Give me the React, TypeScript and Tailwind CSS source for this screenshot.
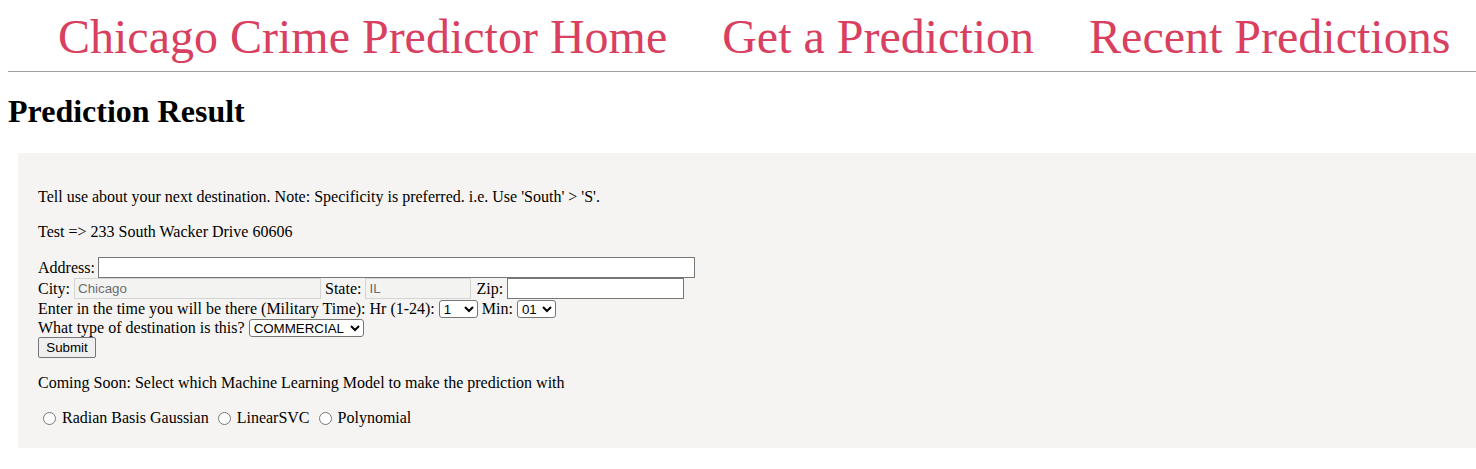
import React from 'react';

const navLinks = ['Chicago Crime Predictor Home', 'Get a Prediction', 'Recent Predictions'];

const models = ['Radian Basis Gaussian', 'LinearSVC', 'Polynomial'];

const App = () => {
  return (
    <div className="min-h-[469px] bg-white pl-2 font-['Liberation_Serif',serif] text-black">
      {/* Top navigation */}
      <nav className="flex h-[71px] gap-[55px] pl-[50px] pt-[13px]">
        {navLinks.map((link) => (
          <a key={link} href="#" className="text-[48px] leading-[48px] text-[#d9405f] whitespace-nowrap">
            {link}
          </a>
        ))}
      </nav>
      <hr className="border-t border-[#a0a0a0]" />

      <h1 className="mt-[23px] text-[32px] font-bold leading-[32px]">Prediction Result</h1>

      {/* Prediction form panel */}
      <div className="ml-[10px] mt-[26px] bg-[#f5f4f2] px-5 pt-[34px] pb-5 text-[16px] leading-[20px]">
        <p>Tell use about your next destination. Note: Specificity is preferred. i.e. Use 'South' &gt; 'S'.</p>
        <p className="mt-[15px]">Test =&gt; 233 South Wacker Drive 60606</p>

        <form className="mt-[15px]" onSubmit={(e) => e.preventDefault()}>
          <div className="flex h-[21px] items-center gap-[3px]">
            <label>Address:</label>
            <input
              type="text"
              className="h-[21px] w-[597px] border border-[#767676] bg-white px-[2px] font-['Liberation_Sans',sans-serif] text-[13.33px]"
            />
          </div>

          <div className="flex h-[21px] items-center">
            <label className="mr-[4px]">City:</label>
            <input
              type="text"
              disabled
              defaultValue="Chicago"
              className="h-[21px] w-[247px] border border-[#d4d4d3] bg-[#f3f3f2] px-[3px] font-['Liberation_Sans',sans-serif] text-[13.33px] text-[#6d6d6d]"
            />
            <label className="ml-[4px] mr-[4px]">State:</label>
            <input
              type="text"
              disabled
              defaultValue="IL"
              className="h-[21px] w-[106px] border border-[#d4d4d3] bg-[#f3f3f2] px-[3px] font-['Liberation_Sans',sans-serif] text-[13.33px] text-[#6d6d6d]"
            />
            <label className="ml-[5px] mr-[4px]">Zip:</label>
            <input
              type="text"
              className="h-[21px] w-[177px] border border-[#767676] bg-white px-[2px] font-['Liberation_Sans',sans-serif] text-[13.33px]"
            />
          </div>

          <div className="flex h-[19px] items-center">
            <span className="mr-[4px]">Enter in the time you will be there (Military Time): Hr (1-24):</span>
            <select className="h-[18px] w-[39px] rounded-[3px] border border-[#767676] bg-white font-['Liberation_Sans',sans-serif] text-[13.33px]">
              <option>1</option>
            </select>
            <span className="ml-[4px] mr-[4px]">Min:</span>
            <select className="h-[18px] w-[39px] rounded-[3px] border border-[#767676] bg-white font-['Liberation_Sans',sans-serif] text-[13.33px]">
              <option>01</option>
            </select>
          </div>

          <div className="flex h-[19px] items-center">
            <span className="mr-[4px]">What type of destination is this?</span>
            <select className="h-[18px] w-[115px] rounded-[3px] border border-[#767676] bg-white font-['Liberation_Sans',sans-serif] text-[13.33px]">
              <option>COMMERCIAL</option>
            </select>
          </div>

          <div className="flex h-[21px] items-center">
            <button
              type="submit"
              className="h-[21px] w-[58px] rounded-[2px] border border-[#767676] bg-[#efefef] font-['Liberation_Sans',sans-serif] text-[13.33px]"
            >
              Submit
            </button>
          </div>
        </form>

        <p className="mt-[15px]">Coming Soon: Select which Machine Learning Model to make the prediction with</p>

        <div className="mt-[15px] flex h-[20px] items-center">
          {models.map((model) => (
            <label key={model} className="flex items-center">
              <input type="radio" name="model" className="ml-[5px] mr-[6px] h-[13px] w-[13px]" />
              <span className="mr-[4px]">{model}</span>
            </label>
          ))}
        </div>
      </div>
    </div>
  );
};

export default App;
